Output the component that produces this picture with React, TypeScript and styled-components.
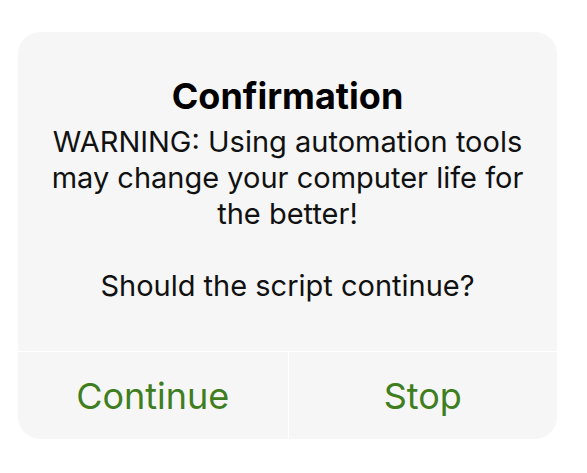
import styled, { createGlobalStyle } from "styled-components";

const GlobalStyle = createGlobalStyle`
  html, body {
    margin: 0;
    padding: 0;
    background: #ffffff;
  }
  body {
    font-family: Inter, "Liberation Sans", sans-serif;
    -webkit-font-smoothing: antialiased;
  }
`;

const Page = styled.div`
  width: 587px;
  height: 473px;
  padding: 32px 30px 34px 18px;
  box-sizing: border-box;
`;

const Dialog = styled.div`
  display: flex;
  flex-direction: column;
  height: 100%;
  background: #f6f6f6;
  border-radius: 22px;
  overflow: hidden;
`;

const Body = styled.div`
  flex: 1;
  display: flex;
  flex-direction: column;
  align-items: center;
  padding: 42px 12px 0;
  text-align: center;
`;

const Title = styled.h1`
  margin: 0 0 6px;
  font-size: 36px;
  font-weight: 700;
  line-height: 44px;
  color: #000;
`;

const Message = styled.p`
  margin: 0;
  font-size: 29px;
  line-height: 36px;
  color: #111;
  white-space: pre-line;
`;

const Actions = styled.div`
  display: grid;
  grid-template-columns: 1fr 1fr;
  height: 87px;
  border-top: 1px solid #ffffff;
`;

const Action = styled.button<{ $divider?: boolean }>`
  all: unset;
  display: flex;
  align-items: center;
  justify-content: center;
  font-family: Inter, "Liberation Sans", sans-serif;
  font-size: 36px;
  color: #3f7e1e;
  cursor: pointer;
  border-left: ${({ $divider }) => ($divider ? "1px solid #ffffff" : "none")};
`;

export default function App() {
  return (
    <>
      <GlobalStyle />
      <Page>
        <Dialog>
          <Body>
            <Title>Confirmation</Title>
            <Message>
              {"WARNING: Using automation tools\nmay change your computer life for\nthe better!\n\nShould the script continue?"}
            </Message>
          </Body>
          <Actions>
            <Action>Continue</Action>
            <Action $divider>Stop</Action>
          </Actions>
        </Dialog>
      </Page>
    </>
  );
}
